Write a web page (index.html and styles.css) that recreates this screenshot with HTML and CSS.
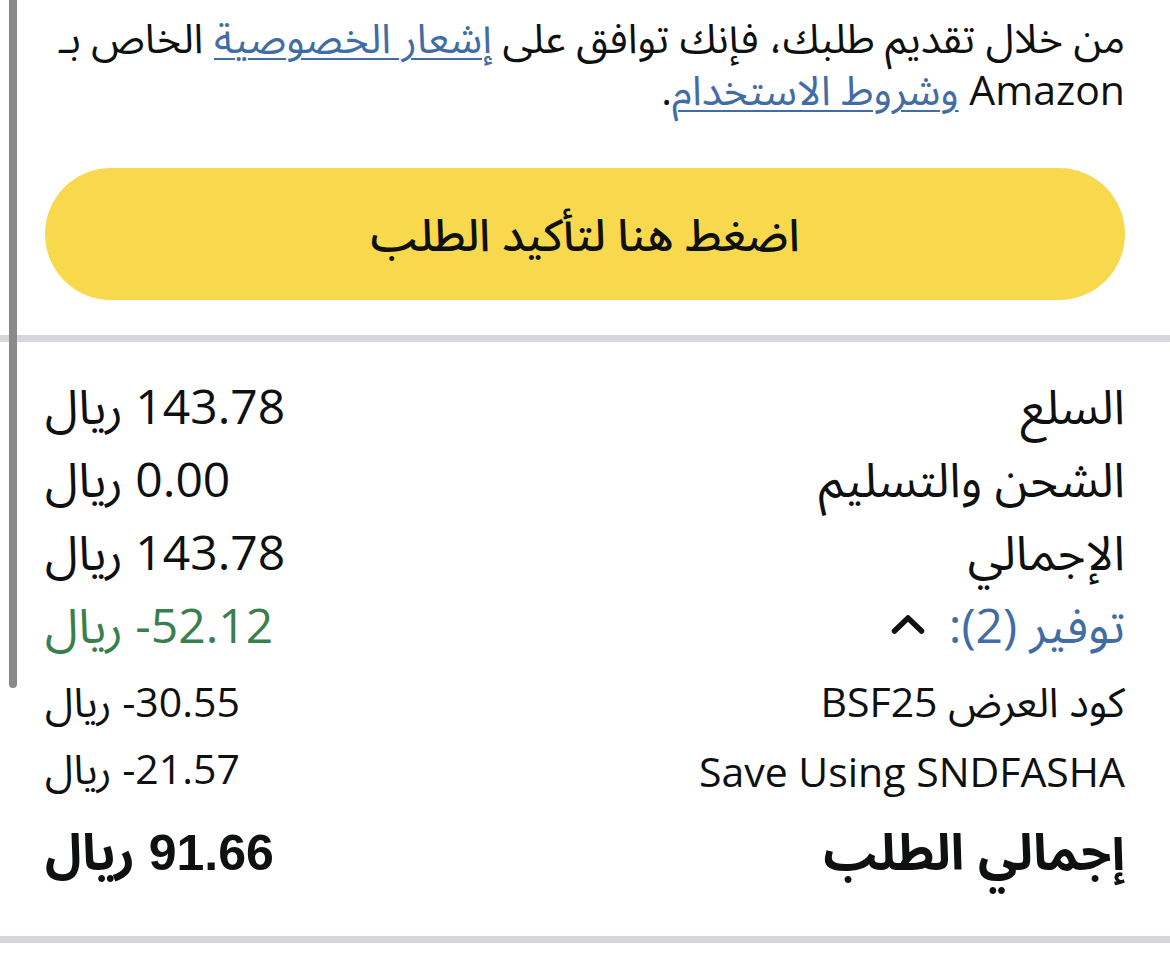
FILE: index.html
```html
<!DOCTYPE html>
<html lang="ar" dir="rtl">
<head>
<meta charset="utf-8">
<title>تأكيد الطلب</title>
<link rel="stylesheet" href="styles.css">
</head>
<body>
<div class="page">
  <div class="scrollbar"></div>
  <section class="terms">
    <p class="terms-text">من خلال تقديم طلبك، فإنك توافق على <a href="#" class="link">إشعار الخصوصية</a> الخاص بـ<br>Amazon <a href="#" class="link">وشروط الاستخدام</a>.</p>
    <button class="confirm-btn" type="button">اضغط هنا لتأكيد الطلب</button>
  </section>
  <hr class="divider">
  <section class="summary">
    <div class="row big"><span class="label">السلع</span><span class="value"><bdi dir="ltr">143.78</bdi> ريال</span></div>
    <div class="row big"><span class="label">الشحن والتسليم</span><span class="value"><bdi dir="ltr">0.00</bdi> ريال</span></div>
    <div class="row big"><span class="label">الإجمالي</span><span class="value"><bdi dir="ltr">143.78</bdi> ريال</span></div>
    <div class="row big savings"><span class="label savings-label"><span class="link-text">توفير (2):</span><svg class="chevron" width="34" height="22" viewBox="0 0 34 22" aria-hidden="true"><polyline points="3.5,18 17,5 30.5,18" fill="none" stroke="#111" stroke-width="5.5" stroke-linecap="round" stroke-linejoin="round"/></svg></span><span class="value green"><bdi dir="ltr">-52.12</bdi> ريال</span></div>
    <div class="row small first-small"><span class="label">كود العرض BSF25</span><span class="value"><bdi dir="ltr">-30.55</bdi> ريال</span></div>
    <div class="row small"><span class="label">Save Using SNDFASHA</span><span class="value"><bdi dir="ltr">-21.57</bdi> ريال</span></div>
    <div class="row total"><span class="label">إجمالي الطلب</span><span class="value"><bdi dir="ltr">91.66</bdi> ريال</span></div>
  </section>
  <hr class="divider bottom">
</div>
</body>
</html>
```

FILE: styles.css
```css
html, body {
  margin: 0;
  padding: 0;
  background: #ffffff;
}

body {
  font-family: "Open Sans", "Noto Sans Arabic", "Noto Sans", "DejaVu Sans", sans-serif;
  color: #0f1111;
  direction: rtl;
}

.page {
  position: relative;
  width: 1170px;
  height: 967px;
  overflow: hidden;
}

.scrollbar {
  position: absolute;
  left: 9px;
  top: -10px;
  width: 8px;
  height: 698px;
  border-radius: 4px;
  background: #8a8a8a;
  z-index: 5;
}

.terms {
  padding: 11px 45px 0 45px;
}

.terms-text {
  margin: 0;
  font-size: 41px;
  line-height: 52px;
}

.link {
  color: #426da4;
  text-decoration: underline;
  text-decoration-thickness: 1.5px;
  text-underline-offset: 5px;
}

.confirm-btn {
  display: flex;
  align-items: center;
  justify-content: center;
  width: 100%;
  height: 132px;
  margin-top: 53px;
  border: none;
  border-radius: 66px;
  background: #f8d94e;
  color: #0f1111;
  font-family: "Noto Sans Arabic", "Open Sans", "DejaVu Sans", sans-serif;
  font-size: 45px;
  font-weight: 500;
  padding: 4px 0 0 0;
}

.divider {
  margin: 35px 0 0 0;
  border: none;
  height: 7px;
  background: #d6d7da;
}

.divider.bottom {
  margin-top: 42px;
}

.summary {
  padding: 30px 45px 0 45px;
}

.row {
  display: flex;
  justify-content: space-between;
  align-items: center;
}

.row.big {
  height: 73px;
  font-size: 48px;
}

.row.small {
  height: 67px;
  font-size: 41px;
}

.row.first-small {
  margin-top: 6px;
}

.row.total {
  height: 80px;
  margin-top: 10px;
  font-family: "Liberation Sans", "Noto Sans Arabic", "DejaVu Sans", sans-serif;
  font-size: 50px;
  font-weight: 700;
}

.label, .value {
  white-space: nowrap;
}

.savings-label {
  display: flex;
  align-items: center;
  gap: 24px;
}

.link-text {
  color: #426da4;
}

.chevron {
  display: block;
  margin-top: -8px;
}

.green {
  color: #3a7f4d;
}
```
